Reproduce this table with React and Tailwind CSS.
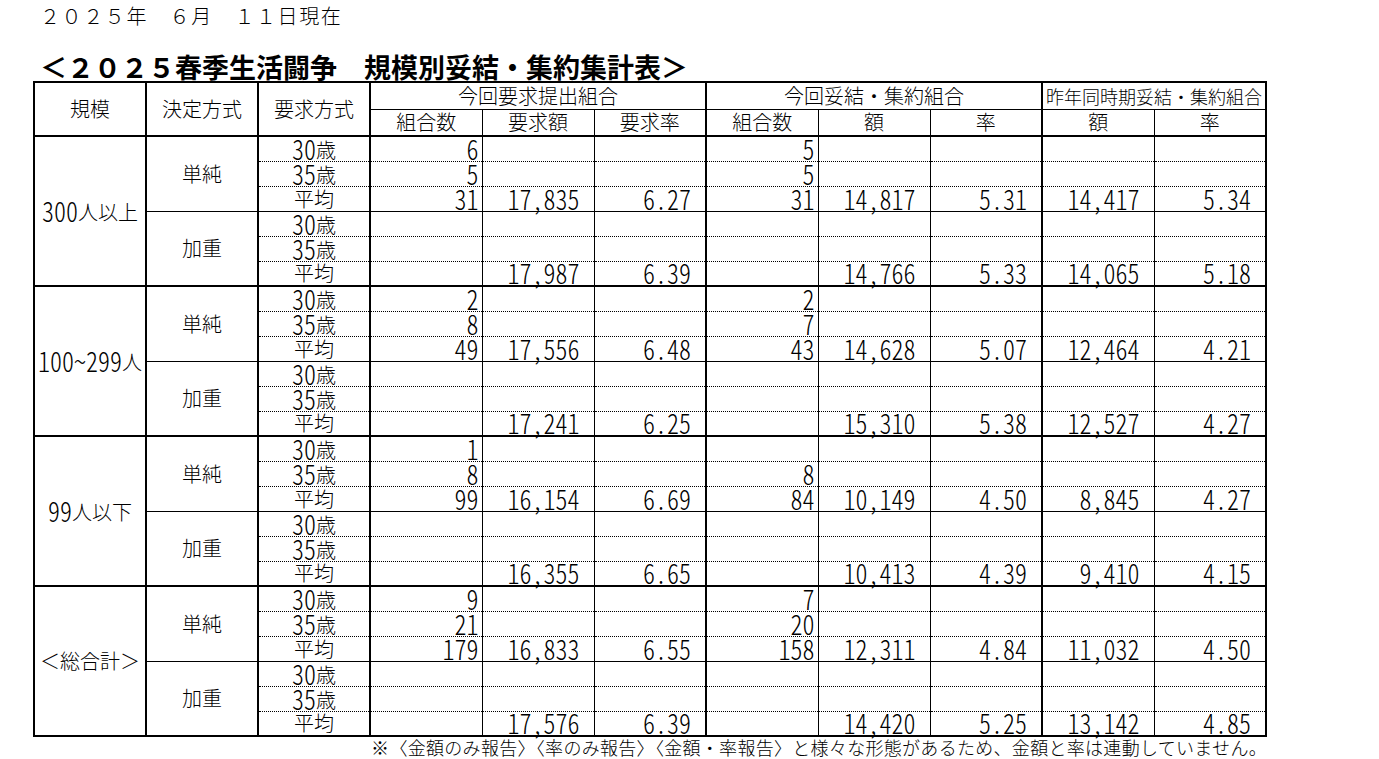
import React from "react";

const NUM =
  "inline-block font-['Noto_Sans_CJK_JP',sans-serif] font-light text-[24px] leading-[20px] [font-feature-settings:'hwid'] scale-y-[1.15]";

function N({ children }) {
  return <span className={NUM}>{children}</span>;
}

const RIGHT = [
  "border-r-2",
  "border-r-2",
  "border-r-2",
  "border-r",
  "border-r",
  "border-r-2",
  "border-r",
  "border-r",
  "border-r-2",
  "border-r",
  "border-r-2",
];

const groups = [
  {
    label: (
      <>
        <N>300</N>人以上
      </>
    ),
    rows: [
      ["6", "", "", "5", "", "", "", ""],
      ["5", "", "", "5", "", "", "", ""],
      ["31", "17,835", "6.27", "31", "14,817", "5.31", "14,417", "5.34"],
      ["", "", "", "", "", "", "", ""],
      ["", "", "", "", "", "", "", ""],
      ["", "17,987", "6.39", "", "14,766", "5.33", "14,065", "5.18"],
    ],
  },
  {
    label: (
      <>
        <N>100~299</N>人
      </>
    ),
    rows: [
      ["2", "", "", "2", "", "", "", ""],
      ["8", "", "", "7", "", "", "", ""],
      ["49", "17,556", "6.48", "43", "14,628", "5.07", "12,464", "4.21"],
      ["", "", "", "", "", "", "", ""],
      ["", "", "", "", "", "", "", ""],
      ["", "17,241", "6.25", "", "15,310", "5.38", "12,527", "4.27"],
    ],
  },
  {
    label: (
      <>
        <N>99</N>人以下
      </>
    ),
    rows: [
      ["1", "", "", "", "", "", "", ""],
      ["8", "", "", "8", "", "", "", ""],
      ["99", "16,154", "6.69", "84", "10,149", "4.50", "8,845", "4.27"],
      ["", "", "", "", "", "", "", ""],
      ["", "", "", "", "", "", "", ""],
      ["", "16,355", "6.65", "", "10,413", "4.39", "9,410", "4.15"],
    ],
  },
  {
    label: <>＜総合計＞</>,
    rows: [
      ["9", "", "", "7", "", "", "", ""],
      ["21", "", "", "20", "", "", "", ""],
      ["179", "16,833", "6.55", "158", "12,311", "4.84", "11,032", "4.50"],
      ["", "", "", "", "", "", "", ""],
      ["", "", "", "", "", "", "", ""],
      ["", "17,576", "6.39", "", "14,420", "5.25", "13,142", "4.85"],
    ],
  },
];

const AGES = [
  <>
    <N>30</N>歳
  </>,
  <>
    <N>35</N>歳
  </>,
  <>平均</>,
  <>
    <N>30</N>歳
  </>,
  <>
    <N>35</N>歳
  </>,
  <>平均</>,
];

function bottomCls(i) {
  if (i === 5) return "border-b-2";
  if (i === 2) return "border-b";
  return "[border-bottom:1px_dotted_#000]";
}

export default function App() {
  const bodyRows = [];
  groups.forEach((g, gi) => {
    g.rows.forEach((vals, i) => {
      const b = bottomCls(i);
      bodyRows.push(
        <tr key={gi * 6 + i} className="h-[25px]">
          {i === 0 && (
            <td
              rowSpan={6}
              className="border-l-2 border-r-2 border-b-2 border-black text-center p-0"
            >
              {g.label}
            </td>
          )}
          {i === 0 && (
            <td rowSpan={3} className="border-r-2 border-b border-black text-center p-0">
              単純
            </td>
          )}
          {i === 3 && (
            <td rowSpan={3} className="border-r-2 border-b-2 border-black text-center p-0">
              加重
            </td>
          )}
          <td className={`${RIGHT[2]} ${b} border-black text-center p-0`}>{AGES[i]}</td>
          {vals.map((v, ci) => {
            const col = ci + 3;
            const pad = ci === 0 || ci === 3 ? "pr-[3px]" : "pr-[14px]";
            return (
              <td key={ci} className={`${RIGHT[col]} ${b} border-black text-right p-0 ${pad}`}>
                {v ? <N>{v}</N> : null}
              </td>
            );
          })}
        </tr>
      );
    });
  });

  return (
    <div className="w-[1379px] h-[759px] bg-white text-black overflow-hidden font-light font-['Noto_Sans_CJK_JP','Noto_Sans',sans-serif]">
      <div className="h-[32px] pl-[40px] flex items-center text-[20px] tracking-[1.6px] leading-none">
        ２０２５年　６月　１１日現在
      </div>
      <div className="h-[49px] pl-[40px] flex items-end">
        <span className="text-[27px] font-bold leading-[28px]">
          ＜２０２５春季生活闘争　規模別妥結・集約集計表＞
        </span>
      </div>
      <div className="pl-[33px]">
        <table className="table-fixed border-collapse w-[1234px] text-[20px] leading-[20px] whitespace-nowrap">
          <colgroup>
            {Array.from({ length: 11 }).map((_, i) => (
              <col key={i} className="w-[112px]" />
            ))}
          </colgroup>
          <thead>
            <tr className="h-[27px]">
              <th rowSpan={2} className="border-l-2 border-t-2 border-b-2 border-r-2 border-black font-light p-0">
                規模
              </th>
              <th rowSpan={2} className="border-t-2 border-b-2 border-r-2 border-black font-light p-0">
                決定方式
              </th>
              <th rowSpan={2} className="border-t-2 border-b-2 border-r-2 border-black font-light p-0">
                要求方式
              </th>
              <th colSpan={3} className="border-t-2 border-b border-r-2 border-black font-light p-0">
                今回要求提出組合
              </th>
              <th colSpan={3} className="border-t-2 border-b border-r-2 border-black font-light p-0">
                今回妥結・集約組合
              </th>
              <th colSpan={2} className="border-t-2 border-b border-r-2 border-black font-light p-0 text-[18px]">
                昨年同時期妥結・集約組合
              </th>
            </tr>
            <tr className="h-[27px]">
              <th className="border-r border-b-2 border-black font-light p-0">組合数</th>
              <th className="border-r border-b-2 border-black font-light p-0">要求額</th>
              <th className="border-r-2 border-b-2 border-black font-light p-0">要求率</th>
              <th className="border-r border-b-2 border-black font-light p-0">組合数</th>
              <th className="border-r border-b-2 border-black font-light p-0">額</th>
              <th className="border-r-2 border-b-2 border-black font-light p-0">率</th>
              <th className="border-r border-b-2 border-black font-light p-0">額</th>
              <th className="border-r-2 border-b-2 border-black font-light p-0">率</th>
            </tr>
          </thead>
          <tbody>{bodyRows}</tbody>
        </table>
        <div className="w-[1234px] text-right text-[18px] leading-[20px] tracking-[0.3px]">
          ※〈金額のみ報告〉〈率のみ報告〉〈金額・率報告〉と様々な形態があるため、金額と率は連動していません。
        </div>
      </div>
    </div>
  );
}
